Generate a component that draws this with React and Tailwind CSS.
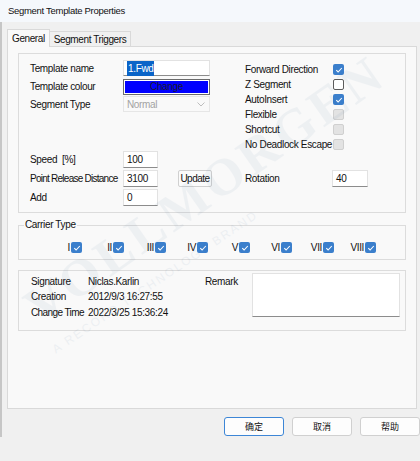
import React from 'react';

const font = { fontFamily: '"Liberation Sans", Arial, sans-serif' };

const Check = ({ state = 'on' }) => {
  if (state === 'on') {
    return (
      <span className="w-[11px] h-[11px] rounded-[2px] bg-[#3b7fcc] flex items-center justify-center shrink-0">
        <svg width="8" height="8" viewBox="0 0 8 8">
          <path d="M1.3 4.2 L3.1 6 L6.8 2" fill="none" stroke="#ffffff" strokeWidth="1.1" />
        </svg>
      </span>
    );
  }
  if (state === 'off') {
    return <span className="w-[11px] h-[11px] rounded-[2px] bg-white border border-[#5c5c5c] shrink-0" />;
  }
  return <span className="w-[11px] h-[11px] rounded-[2px] bg-[#e3e3e3] border border-[#d0d0d0] shrink-0" />;
};

const Field = ({ value, className = '' }) => (
  <div className={`bg-white border border-[#e2e2e2] border-b-[#8c8c8c] flex items-center pl-[3px] ${className}`}>
    {value}
  </div>
);

const rightRows = [
  ['Forward Direction', 'on'],
  ['Z Segment', 'off'],
  ['AutoInsert', 'on'],
  ['Flexible', 'dis'],
  ['Shortcut', 'dis'],
  ['No Deadlock Escape', 'dis'],
];

const carriers = ['I', 'II', 'III', 'IV', 'V', 'VI', 'VII', 'VIII'];

export default function App() {
  return (
    <div
      className="relative w-[420px] h-[461px] bg-[#f0f0f0] overflow-hidden text-[10px] tracking-[-0.35px] text-[#111111]"
      style={font}
    >
      {/* title bar */}
      <div className="h-[22px] bg-[#f5f8fc] flex items-center pl-[8px] text-[9.5px] tracking-[-0.3px]">
        Segment Template Properties
      </div>

      <div className="h-[415px] border-l-2 border-[#c6c6c6] pl-[5px] pr-[3px] pt-[7px]">
        {/* tabs */}
        <div className="flex items-end h-[17px] tracking-[-0.4px]">
          <div className="h-[18px] px-[4px] bg-[#f9f9f9] border border-[#d9d9d9] border-b-0 flex items-center relative z-10 -mb-px">
            General
          </div>
          <div className="h-[15px] px-[4px] bg-[#f0f0f0] border border-[#d9d9d9] border-l-0 border-b-0 flex items-center">
            Segment Triggers
          </div>
        </div>

        {/* panel */}
        <div className="h-[363px] w-[410px] bg-[#f9f9f9] border border-[#d9d9d9] pt-[6px] px-[10px]">
          {/* group 1 */}
          <div className="h-[160px] border border-[#dcdcdc] pt-[6px] pl-[11px]">
            <div className="flex h-[91px]">
              <div className="w-[215px] flex flex-col">
                <div className="flex items-center h-[16px]">
                  <span className="w-[93px]">Template name</span>
                  <Field
                    className="w-[87px] h-[16px] border-b-[#2b6fc1]"
                    value={<span className="bg-[#0a64c8] text-white px-px">1.Fwd</span>}
                  />
                </div>
                <div className="flex items-center h-[15px] mt-[3px]">
                  <span className="w-[93px]">Template colour</span>
                  <div className="w-[87px] h-[16px] border border-[#6b6b6b] bg-white p-px">
                    <div className="w-full h-full bg-[#0000ff] flex items-center justify-center text-[#1a1a2e]">Change</div>
                  </div>
                </div>
                <div className="flex items-center h-[16px] mt-[2px]">
                  <span className="w-[93px]">Segment Type</span>
                  <div className="w-[87px] h-[16px] border border-[#e6e6e6] bg-[#f9f9f9] flex items-center justify-between pl-[3px] pr-[4px] text-[#a3a3a3]">
                    Normal
                    <svg width="8" height="5" viewBox="0 0 8 5">
                      <path d="M0.5 0.5 L4 4 L7.5 0.5" fill="none" stroke="#b5b5b5" strokeWidth="0.9" />
                    </svg>
                  </div>
                </div>
              </div>
              <div className="flex flex-col pt-[2px]">
                {rightRows.map(([label, state]) => (
                  <div key={label} className="flex items-center h-[15px]">
                    <span className="w-[88px] whitespace-nowrap">{label}</span>
                    <Check state={state} />
                  </div>
                ))}
              </div>
            </div>

            <div className="flex flex-col gap-[2px]">
              <div className="flex items-center h-[17px]">
                <span className="w-[93px]">Speed&nbsp;&nbsp;[%]</span>
                <Field className="w-[35px] h-[17px]" value="100" />
              </div>
              <div className="flex items-center h-[17px]">
                <span className="w-[93px] whitespace-nowrap tracking-[-0.75px]">Point Release Distance</span>
                <Field className="w-[35px] h-[17px]" value="3100" />
                <button className="ml-[20px] w-[34px] h-[17px] bg-[#fbfbfb] border border-[#d0d0d0] rounded-[2px] flex items-center justify-center tracking-[-0.5px]">
                  Update
                </button>
                <span className="ml-[33px] w-[87px]">Rotation</span>
                <Field className="w-[36px] h-[17px]" value="40" />
              </div>
              <div className="flex items-center h-[17px]">
                <span className="w-[93px]">Add</span>
                <Field className="w-[35px] h-[17px]" value="0" />
              </div>
            </div>
          </div>

          {/* carrier type */}
          <div className="relative h-[35px] mt-[12px] border border-[#dcdcdc] pt-[14px] pl-[21px]">
            <span className="absolute -top-[7px] left-[5px] bg-[#f9f9f9] px-px leading-[12px]">Carrier Type</span>
            <div className="flex">
              {carriers.map((c) => (
                <div key={c} className="w-[42px] flex items-center justify-end gap-px">
                  <span>{c}</span>
                  <Check state="on" />
                </div>
              ))}
            </div>
          </div>

          {/* signature */}
          <div className="h-[61px] mt-[10px] border border-[#dcdcdc] flex pt-[2px]">
            <div className="w-[186px] shrink-0 pl-[12px] pt-px flex flex-col">
              <div className="flex items-center h-[15px]">
                <span className="w-[57px]">Signature</span>
                <span>Niclas.Karlin</span>
              </div>
              <div className="flex items-center h-[15px]">
                <span className="w-[57px]">Creation</span>
                <span>2012/9/3 16:27:55</span>
              </div>
              <div className="flex items-center h-[16px]">
                <span className="w-[57px] whitespace-nowrap tracking-[-0.6px]">Change Time</span>
                <span>2022/3/25 15:36:24</span>
              </div>
            </div>
            <div className="w-[47px] shrink-0 pt-px h-[16px] flex items-center">Remark</div>
            <div className="w-[148px] h-[44px] bg-white border border-[#e2e2e2] border-b-[#8c8c8c]" />
          </div>
        </div>

        {/* buttons */}
        <div className="flex justify-end gap-[8px] mt-[8px] -mr-[3px]" style={{ fontFamily: '"Noto Sans CJK SC", sans-serif' }}>
          <button className="w-[60px] h-[19px] bg-[#fdfdfd] border border-[#3d86d6] rounded-[3px] text-[9px] tracking-normal">确定</button>
          <button className="w-[60px] h-[19px] bg-[#fdfdfd] border border-[#d0d0d0] rounded-[3px] text-[9px] tracking-normal">取消</button>
          <button className="w-[60px] h-[19px] bg-[#fdfdfd] border border-[#d0d0d0] rounded-[3px] text-[9px] tracking-normal">帮助</button>
        </div>
      </div>

      {/* watermark */}
      <div className="absolute inset-0 pointer-events-none overflow-hidden">
        <div className="absolute left-[205px] top-[190px] w-0 h-0">
          <div
            className="absolute -translate-x-1/2 -translate-y-1/2 -rotate-[35deg] text-[52px] font-bold text-[#2a5a8a] opacity-[0.05] tracking-[4px] whitespace-nowrap"
            style={{ fontFamily: '"Liberation Serif", serif' }}
          >
            VOLLMORGEN
          </div>
        </div>
        <div className="absolute left-[155px] top-[282px] w-0 h-0">
          <div className="absolute -translate-x-1/2 -translate-y-1/2 -rotate-[34deg] text-[12px] text-[#2a5a8a] opacity-[0.06] tracking-[2px] whitespace-nowrap">
            A RECORD TECHNOLOGY BRAND
          </div>
        </div>
      </div>
    </div>
  );
}
